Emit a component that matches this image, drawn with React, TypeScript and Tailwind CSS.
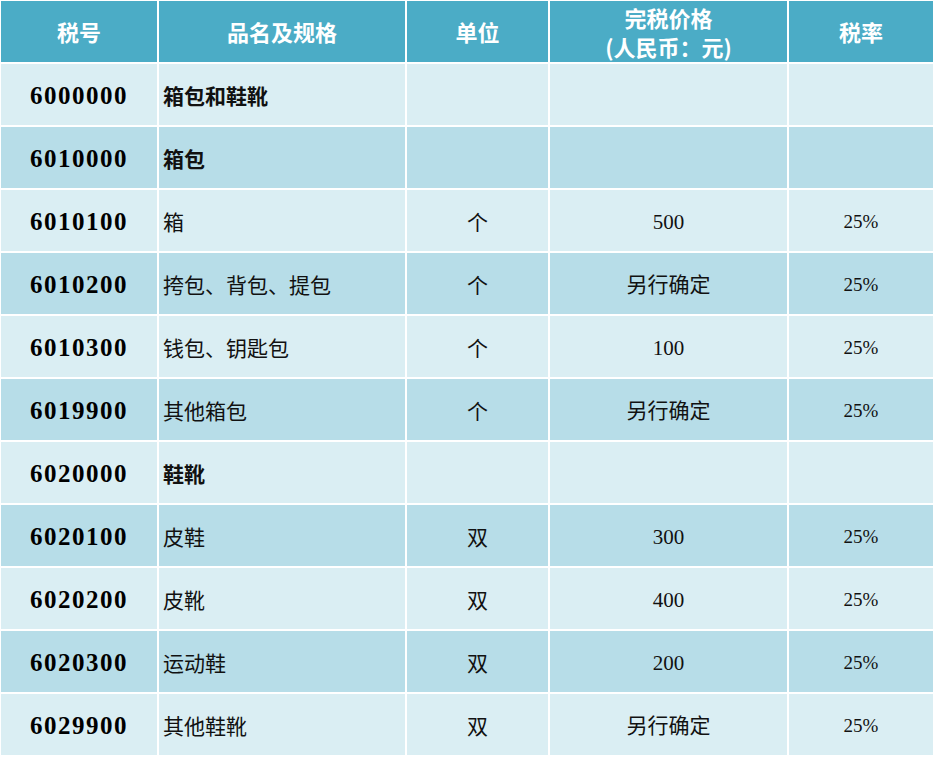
import React from 'react';

type Row = {
  code: string;
  name: string;
  unit: string;
  price: string;
  rate: string;
  group?: boolean;
};

const rows: Row[] = [
  { code: '6000000', name: '箱包和鞋靴', unit: '', price: '', rate: '', group: true },
  { code: '6010000', name: '箱包', unit: '', price: '', rate: '', group: true },
  { code: '6010100', name: '箱', unit: '个', price: '500', rate: '25%' },
  { code: '6010200', name: '挎包、背包、提包', unit: '个', price: '另行确定', rate: '25%' },
  { code: '6010300', name: '钱包、钥匙包', unit: '个', price: '100', rate: '25%' },
  { code: '6019900', name: '其他箱包', unit: '个', price: '另行确定', rate: '25%' },
  { code: '6020000', name: '鞋靴', unit: '', price: '', rate: '', group: true },
  { code: '6020100', name: '皮鞋', unit: '双', price: '300', rate: '25%' },
  { code: '6020200', name: '皮靴', unit: '双', price: '400', rate: '25%' },
  { code: '6020300', name: '运动鞋', unit: '双', price: '200', rate: '25%' },
  { code: '6029900', name: '其他鞋靴', unit: '双', price: '另行确定', rate: '25%' },
];

const serif = "font-['Liberation_Serif','Noto_Sans_CJK_SC',serif]";
const sans = "font-['Noto_Sans_CJK_SC','Noto_Sans',sans-serif]";

export default function App() {
  return (
    <div className="w-[933px] h-[758px] bg-white pt-px pl-px">
      <div className="grid grid-cols-[156px_246px_141px_237px_144px] auto-rows-[61px] grid-rows-[61px] gap-[2px]">
        {/* header */}
        <div className={`bg-[#4bacc6] text-white font-bold text-[22px] flex items-center justify-center ${sans}`}>税号</div>
        <div className={`bg-[#4bacc6] text-white font-bold text-[22px] flex items-center justify-center ${sans}`}>品名及规格</div>
        <div className={`bg-[#4bacc6] text-white font-bold text-[22px] flex items-center justify-center ${sans}`}>单位</div>
        <div className={`bg-[#4bacc6] text-white font-bold text-[22px] leading-[29px] flex flex-col items-center justify-center ${sans}`}>
          <span>完税价格</span>
          <span>(人民币：元)</span>
        </div>
        <div className={`bg-[#4bacc6] text-white font-bold text-[22px] flex items-center justify-center ${sans}`}>税率</div>

        {rows.map((r, i) => {
          const bg = i % 2 === 0 ? 'bg-[#daeef3]' : 'bg-[#b7dde8]';
          return (
            <React.Fragment key={r.code}>
              <div className={`${bg} flex items-center justify-center text-[25px] font-bold tracking-[1.5px] text-black pt-[3px] ${serif}`}>
                {r.code}
              </div>
              <div className={`${bg} flex items-center pl-[4px] text-[21px] text-[#111] pt-[2px] ${sans} ${r.group ? 'font-bold' : ''}`}>
                {r.name}
              </div>
              <div className={`${bg} flex items-center justify-center text-[21px] text-[#111] pt-[2px] ${sans}`}>
                {r.unit}
              </div>
              <div className={`${bg} flex items-center justify-center text-[21px] text-[#111] pt-[4px] ${serif}`}>
                {r.price}
              </div>
              <div className={`${bg} flex items-center justify-center text-[19px] text-[#111] pt-[4px] ${serif}`}>
                {r.rate}
              </div>
            </React.Fragment>
          );
        })}
      </div>
    </div>
  );
}
